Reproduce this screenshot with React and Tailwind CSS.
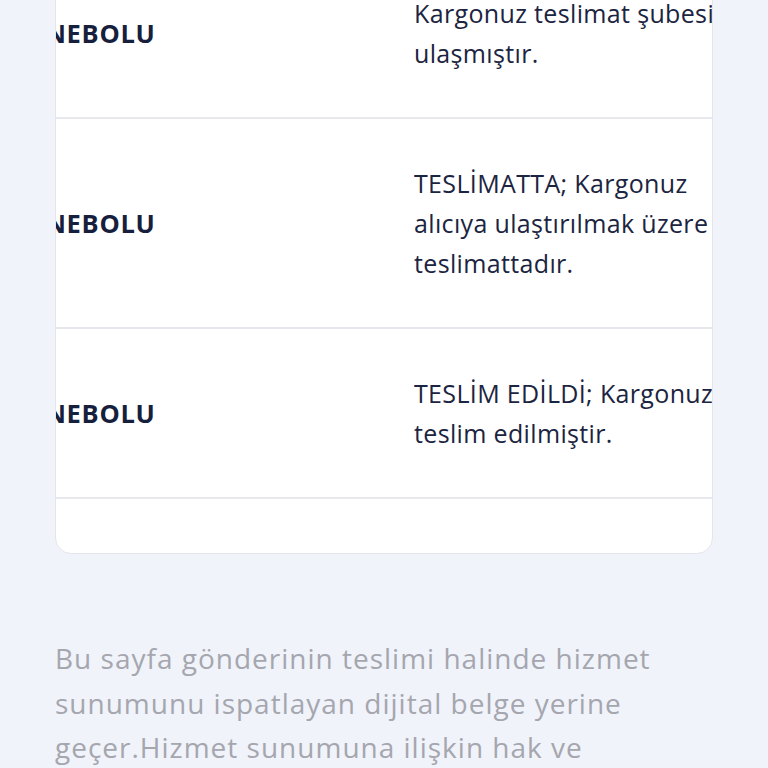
import React, { useEffect, useRef } from "react";

const rows = [
  { date: "14.05.2024 08:12", city: "İNEBOLU", lines: ["Kargonuz teslimat şubesine", "ulaşmıştır."] },
  { date: "14.05.2024 09:40", city: "İNEBOLU", lines: ["TESLİMATTA; Kargonuz", "alıcıya ulaştırılmak üzere", "teslimattadır."] },
  { date: "14.05.2024 13:25", city: "İNEBOLU", lines: ["TESLİM EDİLDİ; Kargonuz", "teslim edilmiştir."] },
];

export default function App() {
  const scrollRef = useRef(null);

  useEffect(() => {
    if (scrollRef.current) scrollRef.current.scrollLeft = 244;
  }, []);

  return (
    <div
      className="h-screen overflow-hidden bg-[#f0f3fa]"
      style={{ fontFamily: '"Open Sans", "Noto Sans", sans-serif' }}
    >
      <div className="px-[55px]">
        <div className="-mt-[52px] overflow-hidden rounded-b-2xl border border-[#e3e5eb] bg-white">
          <div ref={scrollRef} className="overflow-hidden">
            <div className="w-max">
              {rows.map((row) => (
                <div key={row.date} className="flex items-center border-b-2 border-[#e6e8ed]">
                  <div className="w-[200px] shrink-0 px-6 text-[22px] text-[#1b2440]">{row.date}</div>
                  <div className="w-[378px] shrink-0 px-6 text-[25.5px] font-bold tracking-[0.7px] text-[#16203c]">
                    {row.city}
                  </div>
                  <div className="w-[440px] shrink-0 px-6 py-[44px] text-[25px] leading-[40px] tracking-[0.35px] text-[#1b2440] whitespace-nowrap">
                    {row.lines.map((l, i) => (
                      <div key={i}>{l}</div>
                    ))}
                  </div>
                </div>
              ))}
              <div className="h-[54px]" />
            </div>
          </div>
        </div>

        <p className="mt-[82px] whitespace-nowrap text-[28px] leading-[44.5px] tracking-[1px] text-[#a5a6ae]">
          Bu sayfa gönderinin teslimi halinde hizmet
          <br />
          sunumunu ispatlayan dijital belge yerine
          <br />
          geçer.Hizmet sunumuna ilişkin hak ve
          <br />
          yükümlülükler için sözleşme koşullarını inceleyiniz.
        </p>
      </div>
    </div>
  );
}
